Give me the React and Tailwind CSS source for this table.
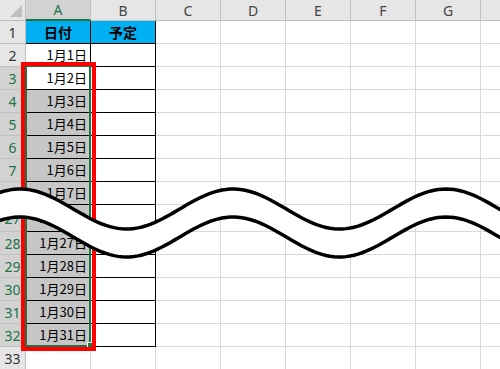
import React from "react";

const COLS = ["C", "D", "E", "F", "G"];

const wavePoints = (dy) => {
    const pts = [];
    for (let x = -10; x <= 510; x += 4) {
        const y = 209 - 20 * Math.cos((2 * Math.PI * (x - 20)) / 213) + dy;
        pts.push([x, y]);
    }
    return pts;
};

const RowHead = ({ n, selected }) => (
    <div
        className={`w-[26px] shrink-0 border-r border-b border-[#c0c0c0] flex items-center justify-center text-[14px] font-['Noto_Sans',sans-serif] ${
            selected ? "bg-[#d2d2d2] text-[#217346]" : "bg-[#e6e6e6] text-[#333]"
        }`}
    >
        {n}
    </div>
);

const GridCells = () => (
    <>
        {COLS.map((c) => (
            <div key={c} className="w-[65px] shrink-0 border-r border-b border-[#d9d9d9] bg-white" />
        ))}
        <div className="flex-1 border-b border-[#d9d9d9] bg-white" />
    </>
);

const DateRow = ({ n, day, height }) => {
    const selected = n >= 3;
    const gray = n >= 4;
    return (
        <div className={`flex ${height}`}>
            <RowHead n={n} selected={selected} />
            <div
                className={`w-[65px] shrink-0 border-r border-b border-black flex items-center justify-end pr-[3px] text-[13px] text-black font-['Noto_Sans_CJK_JP',sans-serif] ${
                    gray ? "bg-[#c6c6c6]" : "bg-white"
                }`}
            >
                1月{day}日
            </div>
            <div className="w-[65px] shrink-0 border-r border-b border-black bg-white" />
            <GridCells />
        </div>
    );
};

const App = () => {
    const up = wavePoints(0);
    const lo = wavePoints(28);
    const band = [...up, ...lo.slice().reverse()].map((p) => p.join(",")).join(" ");
    const line = (pts) => pts.map((p) => p.join(",")).join(" ");

    return (
        <div className="relative w-[500px] h-[369px] overflow-hidden bg-white">
            <div className="flex flex-col">
                {/* column headers */}
                <div className="flex h-[21px]">
                    <div className="w-[26px] shrink-0 border-r border-b border-[#c0c0c0] bg-[#e6e6e6] relative">
                        <div className="absolute right-[3px] bottom-[3px] w-0 h-0 border-l-[12px] border-l-transparent border-b-[12px] border-b-[#bdbdbd]" />
                    </div>
                    <div className="w-[65px] shrink-0 border-r border-[#c0c0c0] border-b-2 border-b-[#217346] bg-[#d2d2d2] flex items-center justify-center text-[14px] text-[#217346] font-['Noto_Sans',sans-serif]">
                        A
                    </div>
                    {["B", ...COLS].map((c) => (
                        <div
                            key={c}
                            className="w-[65px] shrink-0 border-r border-b border-[#c0c0c0] bg-[#e6e6e6] flex items-center justify-center text-[14px] text-[#444] font-['Noto_Sans',sans-serif]"
                        >
                            {c}
                        </div>
                    ))}
                    <div className="flex-1 border-b border-[#c0c0c0] bg-[#e6e6e6]" />
                </div>

                {/* row 1 */}
                <div className="flex h-[23px]">
                    <RowHead n={1} />
                    <div className="w-[65px] shrink-0 border-r border-b border-black bg-[#00b0f0] flex items-center justify-center text-[14px] font-bold text-black font-['Noto_Sans_CJK_JP',sans-serif]">
                        日付
                    </div>
                    <div className="w-[65px] shrink-0 border-r border-b border-black bg-[#00b0f0] flex items-center justify-center text-[14px] font-bold text-black font-['Noto_Sans_CJK_JP',sans-serif]">
                        予定
                    </div>
                    <GridCells />
                </div>

                {[2, 3, 4, 5, 6, 7, 8].map((n) => (
                    <DateRow key={n} n={n} day={n - 1} height="h-[23px]" />
                ))}
                <DateRow n={27} day={26} height="h-[27px]" />
                {[28, 29, 30, 31, 32].map((n) => (
                    <DateRow key={n} n={n} day={n - 1} height="h-[23px]" />
                ))}

                {/* row 33 */}
                <div className="flex h-[23px]">
                    <RowHead n={33} />
                    <div className="w-[65px] shrink-0 border-r border-b border-[#d9d9d9] bg-white" />
                    <div className="w-[65px] shrink-0 border-r border-b border-[#d9d9d9] bg-white" />
                    <GridCells />
                </div>
            </div>

            {/* selection */}
            <div className="absolute left-[25px] top-[65px] w-[66px] h-[282px] border-2 border-[#217346]" />
            <div className="absolute left-[87px] top-[342px] w-[6px] h-[6px] bg-[#217346] border border-white" />
            <div className="absolute left-[21px] top-[62px] w-[75px] h-[289px] border-4 border-[#ff0000]" />

            {/* wave break */}
            <svg className="absolute left-0 top-0 pointer-events-none" width="500" height="369">
                <polygon points={band} fill="#ffffff" />
                <polyline points={line(up)} fill="none" stroke="#000" strokeWidth="3.5" />
                <polyline points={line(lo)} fill="none" stroke="#000" strokeWidth="3.5" />
            </svg>
        </div>
    );
};

export default App;
